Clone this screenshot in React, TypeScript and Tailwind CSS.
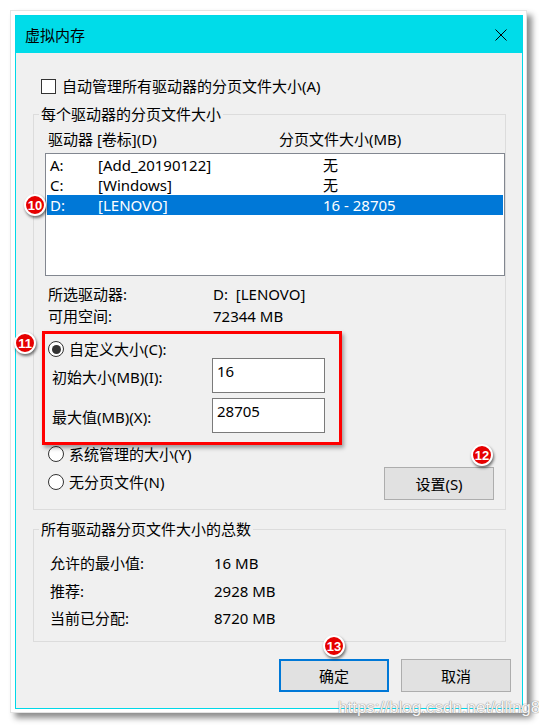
import React from "react";

function Radio({ checked }: { checked?: boolean }) {
  return (
    <span className="flex h-[16px] w-[16px] shrink-0 items-center justify-center rounded-full border border-[#333333] bg-white">
      {checked && <span className="h-[9px] w-[9px] rounded-full bg-[#333333]" />}
    </span>
  );
}

function Badge({ n, className }: { n: string; className: string }) {
  return (
    <div
      className={
        "absolute flex h-[22px] w-[22px] items-center justify-center rounded-full border-2 border-white bg-[#e60000] font-['Liberation_Sans',sans-serif] text-[13px] leading-none font-bold text-white shadow-[1px_2px_3px_rgba(0,0,0,0.55)] " +
        className
      }
    >
      {n}
    </div>
  );
}

const drives = [
  { l: "A:", v: "[Add_20190122]", s: "无", sel: false },
  { l: "C:", v: "[Windows]", s: "无", sel: false },
  { l: "D:", v: "[LENOVO]", s: "16 - 28705", sel: true },
];

export default function App() {
  return (
    <div className="relative h-[725px] w-[539px] overflow-hidden bg-white font-['Noto_Sans','Noto_Sans_CJK_SC',sans-serif] text-[15px] leading-[20px] text-black">
      <div className="ml-[10px] mt-[10px] h-[703px] w-[517px] border border-[#e4e4e4] bg-white pl-[4px] pt-[4px] shadow-[5px_5px_6px_rgba(0,0,0,0.45)]">
        <div className="flex h-[694px] w-[508px] flex-col border border-[#00d8e8] bg-[#f0f0f0]">
          {/* title bar */}
          <div className="flex h-[37px] shrink-0 items-center justify-between bg-[#00dce9] pl-[9px] pr-[15px]">
            <span>虚拟内存</span>
            <svg width="12" height="12" viewBox="0 0 12 12">
              <path d="M0.5 0.5 L11.5 11.5 M11.5 0.5 L0.5 11.5" stroke="#000" strokeWidth="1" fill="none" />
            </svg>
          </div>

          {/* checkbox */}
          <div className="ml-[25px] mt-[23px] flex h-[20px] items-center">
            <span className="h-[15px] w-[15px] border border-[#333333] bg-white" />
            <span className="ml-[6px]">自动管理所有驱动器的分页文件大小(A)</span>
          </div>

          {/* group 1 */}
          <fieldset className="ml-[17px] mt-[8px] flex h-[406px] w-[473px] flex-col border border-[#dcdcdc]">
            <legend className="ml-[5px] px-[2px] leading-[20px]">每个驱动器的分页文件大小</legend>
            <div className="mt-[5px] flex h-[20px] items-center pl-[14px]">
              <span className="w-[231px]">驱动器 [卷标](D)</span>
              <span>分页文件大小(MB)</span>
            </div>
            <div className="ml-[11px] mt-[4px] h-[123px] w-[460px] border border-[#828790] bg-white p-[1px]">
              {drives.map((d) => (
                <div
                  key={d.l}
                  className={
                    "flex h-[20px] items-center pl-[3px] " + (d.sel ? "bg-[#0078d7] text-white" : "")
                  }
                >
                  <span className="w-[48px]">{d.l}</span>
                  <span className="w-[225px]">{d.v}</span>
                  <span>{d.s}</span>
                </div>
              ))}
            </div>
            <div className="mt-[8px] flex h-[20px] items-center pl-[14px]">
              <span className="w-[165px]">所选驱动器:</span>
              <span className="whitespace-pre">D:  [LENOVO]</span>
            </div>
            <div className="mt-[2px] flex h-[20px] items-center pl-[14px]">
              <span className="w-[165px]">可用空间:</span>
              <span>72344 MB</span>
            </div>
            <div className="mt-[14px] flex h-[18px] items-center gap-[5px] pl-[14px]">
              <Radio checked />
              <span>自定义大小(C):</span>
            </div>
            <div className="flex h-[35px] items-center pl-[18px]">
              <span className="w-[160px] pt-[2px]">初始大小(MB)(I):</span>
              <div className="h-[35px] w-[113px] border border-[#7a7a7a] bg-white pl-[4px] pt-[2px]">16</div>
            </div>
            <div className="mt-[5px] flex h-[35px] items-center pl-[18px]">
              <span className="w-[160px] pt-[2px]">最大值(MB)(X):</span>
              <div className="h-[35px] w-[113px] border border-[#7a7a7a] bg-white pl-[4px] pt-[2px]">28705</div>
            </div>
            <div className="mt-[12px] flex items-start justify-between pl-[14px] pr-[11px]">
              <div className="flex flex-col">
                <div className="flex h-[18px] items-center gap-[5px]">
                  <Radio />
                  <span>系统管理的大小(Y)</span>
                </div>
                <div className="mt-[10px] flex h-[18px] items-center gap-[5px]">
                  <Radio />
                  <span>无分页文件(N)</span>
                </div>
              </div>
              <div className="mt-[22px] flex h-[33px] w-[110px] items-center justify-center border border-[#adadad] bg-[#e1e1e1]">
                设置(S)
              </div>
            </div>
          </fieldset>

          {/* group 2 */}
          <fieldset className="ml-[17px] mt-[9px] flex h-[123px] w-[473px] flex-col border border-[#dcdcdc]">
            <legend className="ml-[5px] px-[2px] leading-[20px]">所有驱动器分页文件大小的总数</legend>
            <div className="mt-[14px] flex h-[20px] items-center pl-[16px]">
              <span className="w-[164px]">允许的最小值:</span>
              <span>16 MB</span>
            </div>
            <div className="mt-[8px] flex h-[20px] items-center pl-[16px]">
              <span className="w-[164px]">推荐:</span>
              <span>2928 MB</span>
            </div>
            <div className="mt-[7px] flex h-[20px] items-center pl-[16px]">
              <span className="w-[164px]">当前已分配:</span>
              <span>8720 MB</span>
            </div>
          </fieldset>

          {/* buttons */}
          <div className="mt-[17px] flex justify-end gap-[12px] pr-[11px]">
            <div className="flex h-[33px] w-[110px] items-center justify-center border-2 border-[#0078d7] bg-[#e1e1e1]">
              确定
            </div>
            <div className="flex h-[33px] w-[110px] items-center justify-center border border-[#adadad] bg-[#e1e1e1]">
              取消
            </div>
          </div>
        </div>
      </div>

      {/* annotations */}
      <div className="absolute left-[42px] top-[331px] h-[114px] w-[300px] border-[3px] border-[#ff0000] shadow-[2px_3px_4px_rgba(0,0,0,0.35)]" />
      <Badge n="10" className="left-[24px] top-[194px]" />
      <Badge n="11" className="left-[14px] top-[332px]" />
      <Badge n="12" className="left-[471px] top-[444px]" />
      <Badge n="13" className="left-[323px] top-[635px]" />

      <div className="pointer-events-none absolute left-[338px] top-[697px] whitespace-nowrap font-['Liberation_Sans',sans-serif] text-[17px] leading-[22px] text-[#f6f6f6] [text-shadow:0_0_1px_#8a8a8a,0_0_1px_#8a8a8a]">
        https://blog.csdn.net/dling8
      </div>
    </div>
  );
}
